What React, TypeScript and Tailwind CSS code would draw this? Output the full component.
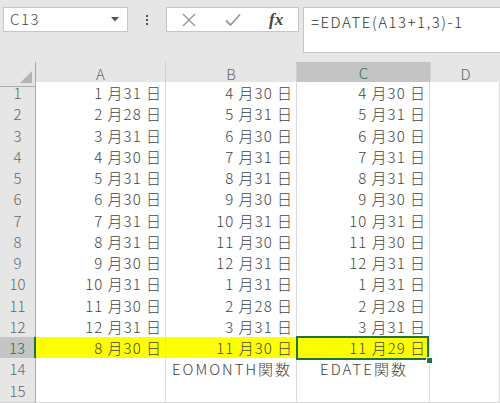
import React from "react";

const A = ["1/31", "2/28", "3/31", "4/30", "5/31", "6/30", "7/31", "8/31", "9/30", "10/31", "11/30", "12/31", "8/30"];
const B = ["4/30", "5/31", "6/30", "7/31", "8/31", "9/30", "10/31", "11/30", "12/31", "1/31", "2/28", "3/31", "11/30"];
const C = ["4/30", "5/31", "6/30", "7/31", "8/31", "9/30", "10/31", "11/30", "12/31", "1/31", "2/28", "3/31", "11/29"];

const fmt = (s?: string) => {
  if (!s) return "";
  const [m, d] = s.split("/");
  return `${m} 月${d} 日`;
};

const font = { fontFamily: '"Noto Sans CJK JP", "Liberation Sans", sans-serif' };

function Cell({
  children,
  yellow,
  active,
  center,
}: {
  children?: React.ReactNode;
  yellow?: boolean;
  active?: boolean;
  center?: boolean;
}) {
  return (
    <div
      className={`relative flex items-center border-r border-b border-[#dadada] text-[15px] font-light text-[#444] whitespace-nowrap ${
        center ? "justify-center tracking-[2px] pl-[2px]" : "justify-end tracking-[1px] pr-[3px]"
      } ${yellow ? "bg-[#ffff00]" : "bg-white"}`}
    >
      {children}
      {active && (
        <>
          <div className="absolute z-10 -left-[1px] -top-[1px] right-0 bottom-0 border-2 border-[#217346]" />
          <div className="absolute z-20 -right-[4px] -bottom-[4px] h-[7px] w-[7px] bg-[#217346] border border-white" />
        </>
      )}
    </div>
  );
}

export default function App() {
  return (
    <div className="w-[500px] h-[403px] overflow-hidden bg-[#e6e6e6] select-none" style={font}>
      {/* formula bar */}
      <div className="h-[62px] flex items-start pt-[7px]">
        <div className="ml-[3px] w-[125px] h-[25px] bg-white border border-[#c6c6c6] flex items-center justify-between pl-[6px] pr-[8px]">
          <span className="text-[15px] font-light text-[#444] tracking-[1.5px]">C13</span>
          <svg width="8" height="5" viewBox="0 0 8 5">
            <path d="M0 0h8L4 4.5z" fill="#555" />
          </svg>
        </div>
        <div className="w-[38px] h-[25px] flex flex-col items-center justify-center gap-[2px]">
          <span className="w-[2px] h-[2px] bg-[#555]" />
          <span className="w-[2px] h-[2px] bg-[#555]" />
          <span className="w-[2px] h-[2px] bg-[#555]" />
        </div>
        <div className="w-[133px] h-[25px] bg-white border border-[#c6c6c6] flex items-center">
          <div className="w-[44px] flex justify-center">
            <svg width="14" height="14" viewBox="0 0 14 14">
              <path d="M1 1L13 13M13 1L1 13" stroke="#999" strokeWidth="1.4" />
            </svg>
          </div>
          <div className="w-[44px] flex justify-center">
            <svg width="16" height="14" viewBox="0 0 16 14">
              <path d="M1 7.5L5.5 12L15 1.5" stroke="#999" strokeWidth="1.8" fill="none" />
            </svg>
          </div>
          <div className="w-[44px] flex justify-center">
            <span
              className="text-[17px] italic font-bold text-[#444] leading-none"
              style={{ fontFamily: '"Liberation Serif", serif' }}
            >
              fx
            </span>
          </div>
        </div>
        <div className="ml-[4px] flex-1 h-[46px] bg-white border border-[#c6c6c6] border-r-0 pl-[7px] pt-[3px] text-[15px] font-light text-[#333] tracking-[1.5px]">
          =EDATE(A13+1,3)-1
        </div>
      </div>

      {/* sheet */}
      <div className="grid grid-cols-[36px_130px_131px_133px_1fr] h-[20px] text-[15px] font-light">
        <div className="relative border-r border-b border-[#ababab] bg-[#e6e6e6]">
          <svg className="absolute right-[3px] bottom-[3px]" width="12" height="12" viewBox="0 0 12 12">
            <path d="M12 0V12H0z" fill="#b4b4b4" />
          </svg>
        </div>
        <div className="flex items-center justify-center border-r border-b border-[#ababab] border-r-[#d0d0d0] text-[#666]">A</div>
        <div className="flex items-center justify-center border-r border-b border-[#ababab] border-r-[#d0d0d0] text-[#666]">B</div>
        <div className="flex items-center justify-center border-b-2 border-[#217346] bg-[#c4c4c4] text-[#217346]">C</div>
        <div className="flex items-center justify-center border-b border-l border-[#ababab] border-l-[#d0d0d0] text-[#666]">D</div>
      </div>
      {Array.from({ length: 15 }, (_, i) => {
        const n = i + 1;
        const sel = n === 13;
        return (
          <div key={n} className="grid grid-cols-[36px_130px_131px_133px_1fr] h-[21.25px]">
            <div
              className={`flex items-center justify-center border-b border-[#d0d0d0] text-[15px] font-light ${
                sel
                  ? "bg-[#c4c4c4] text-[#217346] border-r-2 border-r-[#217346]"
                  : "bg-[#e6e6e6] text-[#666] border-r border-r-[#ababab]"
              }`}
            >
              {n}
            </div>
            <Cell yellow={sel}>{fmt(A[i])}</Cell>
            <Cell yellow={sel} center={n === 14}>
              {n === 14 ? "EOMONTH関数" : fmt(B[i])}
            </Cell>
            <Cell yellow={sel} active={sel} center={n === 14}>
              {n === 14 ? "EDATE関数" : fmt(C[i])}
            </Cell>
            <Cell />
          </div>
        );
      })}
    </div>
  );
}
